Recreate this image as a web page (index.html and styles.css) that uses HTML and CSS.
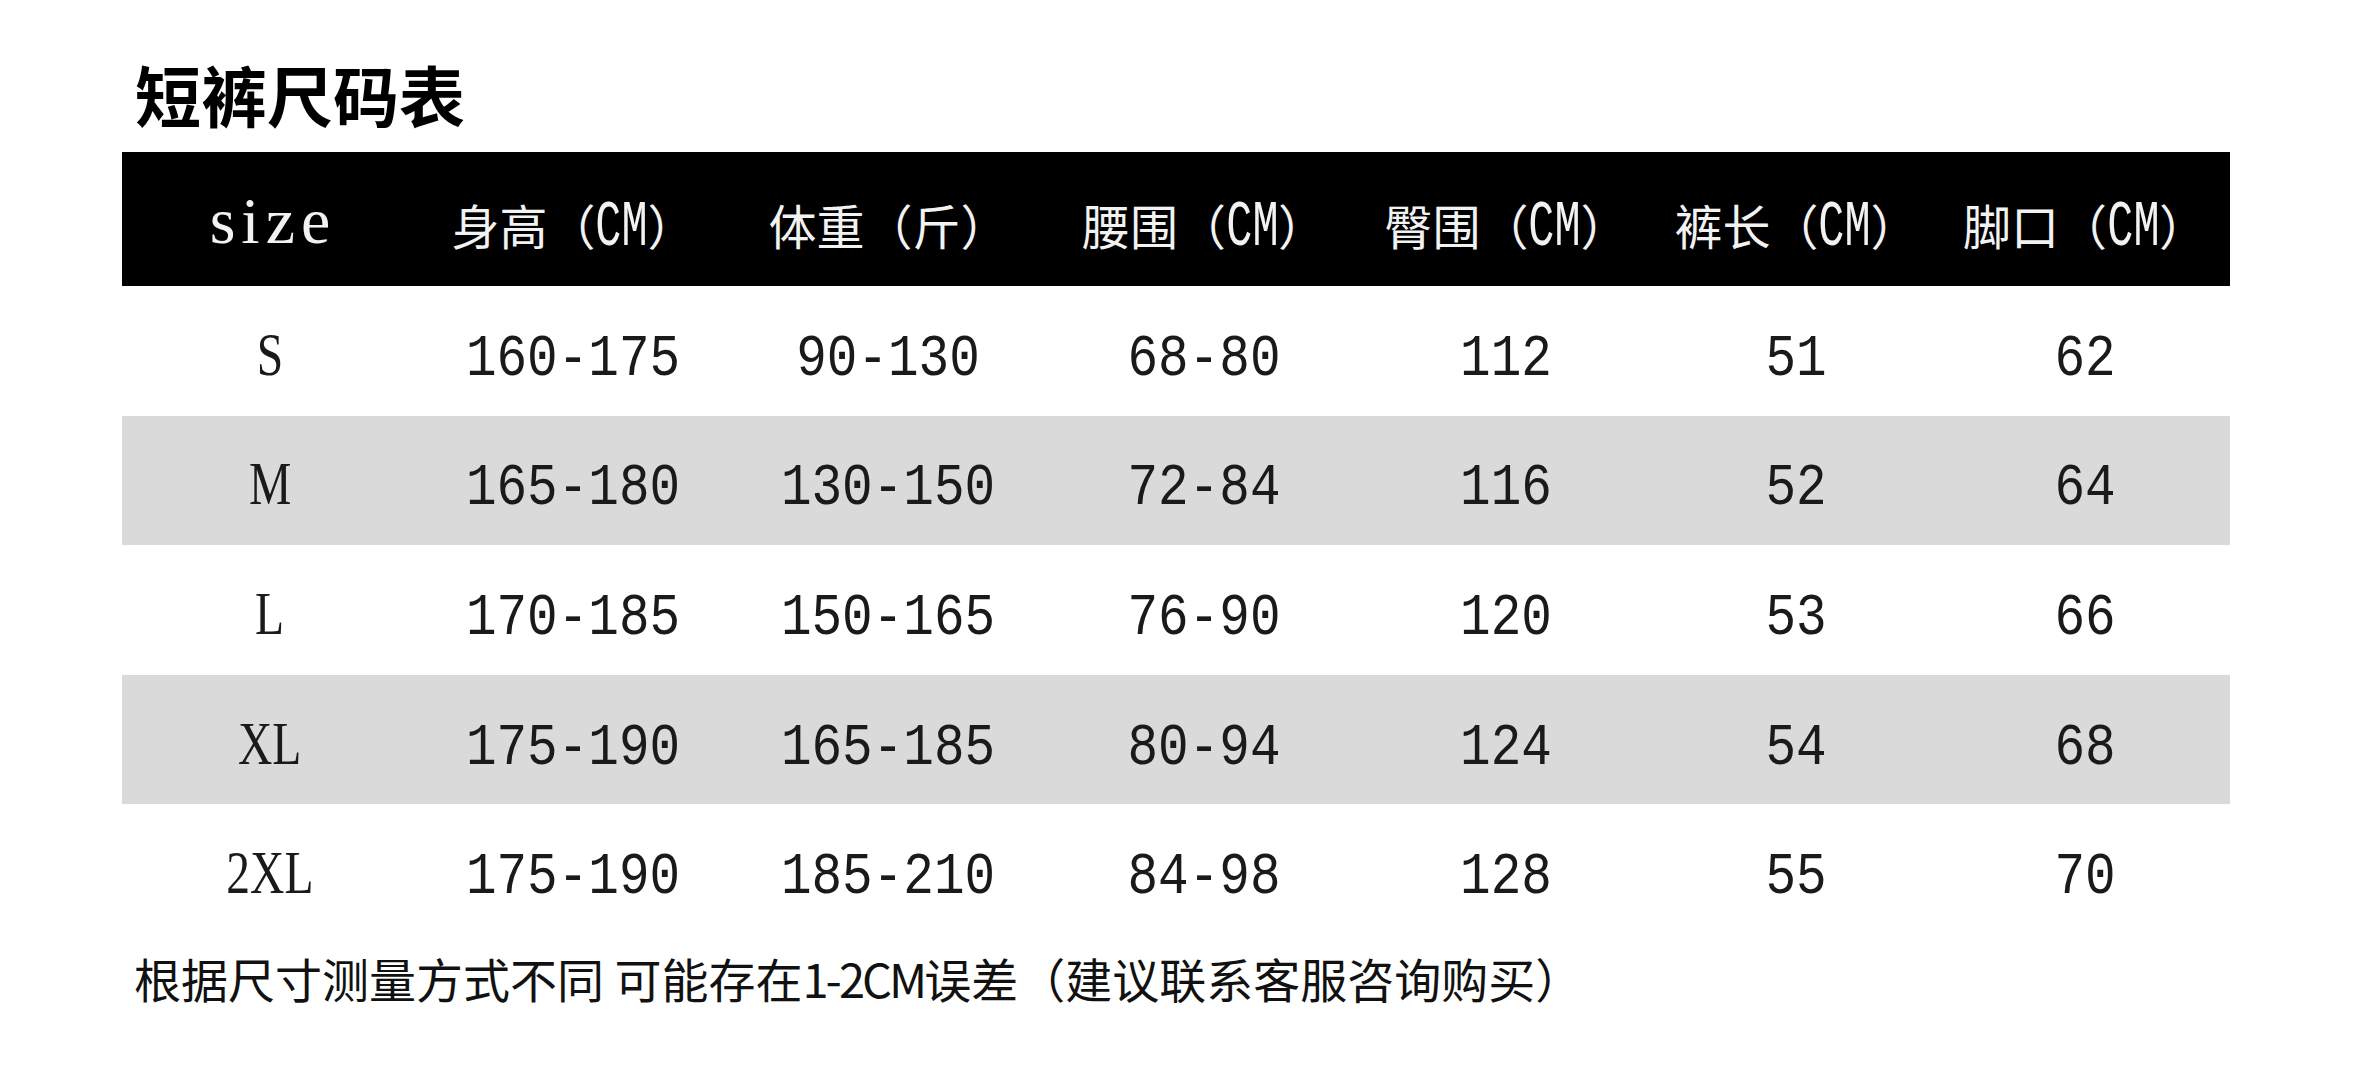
FILE: index.html
```html
<!DOCTYPE html>
<html lang="zh-CN">
<head>
<meta charset="utf-8">
<title>短裤尺码表</title>
<link rel="stylesheet" href="styles.css">
</head>
<body>
<div class="page">
  <h1 class="title">短裤尺码表</h1>
  <div class="table">
    <div class="row head">
      <div class="cell"><span class="lat hsize">size</span></div>
      <div class="cell"><span class="zh">身高（</span><span class="cm"><span class="mono">CM</span></span><span class="zh">）</span></div>
      <div class="cell"><span class="zh">体重（斤）</span></div>
      <div class="cell"><span class="zh">腰围（</span><span class="cm"><span class="mono">CM</span></span><span class="zh">）</span></div>
      <div class="cell"><span class="zh">臀围（</span><span class="cm"><span class="mono">CM</span></span><span class="zh">）</span></div>
      <div class="cell"><span class="zh">裤长（</span><span class="cm"><span class="mono">CM</span></span><span class="zh">）</span></div>
      <div class="cell"><span class="zh">脚口（</span><span class="cm"><span class="mono">CM</span></span><span class="zh">）</span></div>
    </div>
    <div class="row">
      <div class="cell"><span class="lat">S</span></div>
      <div class="cell"><span class="mono">160-175</span></div>
      <div class="cell"><span class="mono">90-130</span></div>
      <div class="cell"><span class="mono">68-80</span></div>
      <div class="cell"><span class="mono">112</span></div>
      <div class="cell"><span class="mono">51</span></div>
      <div class="cell"><span class="mono">62</span></div>
    </div>
    <div class="row alt">
      <div class="cell"><span class="lat">M</span></div>
      <div class="cell"><span class="mono">165-180</span></div>
      <div class="cell"><span class="mono">130-150</span></div>
      <div class="cell"><span class="mono">72-84</span></div>
      <div class="cell"><span class="mono">116</span></div>
      <div class="cell"><span class="mono">52</span></div>
      <div class="cell"><span class="mono">64</span></div>
    </div>
    <div class="row">
      <div class="cell"><span class="lat">L</span></div>
      <div class="cell"><span class="mono">170-185</span></div>
      <div class="cell"><span class="mono">150-165</span></div>
      <div class="cell"><span class="mono">76-90</span></div>
      <div class="cell"><span class="mono">120</span></div>
      <div class="cell"><span class="mono">53</span></div>
      <div class="cell"><span class="mono">66</span></div>
    </div>
    <div class="row alt">
      <div class="cell"><span class="lat">XL</span></div>
      <div class="cell"><span class="mono">175-190</span></div>
      <div class="cell"><span class="mono">165-185</span></div>
      <div class="cell"><span class="mono">80-94</span></div>
      <div class="cell"><span class="mono">124</span></div>
      <div class="cell"><span class="mono">54</span></div>
      <div class="cell"><span class="mono">68</span></div>
    </div>
    <div class="row">
      <div class="cell"><span class="lat">2XL</span></div>
      <div class="cell"><span class="mono">175-190</span></div>
      <div class="cell"><span class="mono">185-210</span></div>
      <div class="cell"><span class="mono">84-98</span></div>
      <div class="cell"><span class="mono">128</span></div>
      <div class="cell"><span class="mono">55</span></div>
      <div class="cell"><span class="mono">70</span></div>
    </div>
  </div>
  <p class="note">根据尺寸测量方式不同 可能存在<span class="note-lat">1-2CM</span>误差（建议联系客服咨询购买）</p>
</div>
</body>
</html>
```
FILE: styles.css
```css
html, body {
  margin: 0;
  padding: 0;
  background: #ffffff;
}
.page {
  width: 2361px;
  height: 1080px;
  box-sizing: border-box;
  padding: 60px 0 0 122px;
  font-family: "Noto Sans CJK SC", sans-serif;
  color: #111111;
}
.title {
  margin: 0 0 26px 13px;
  font-size: 66px;
  line-height: 66px;
  font-weight: 700;
  color: #000000;
}
.table {
  width: 2108px;
}
.row {
  display: grid;
  grid-template-columns: 296px 311px 319px 312px 293px 287px 290px;
  height: 129.6px;
  background: #ffffff;
}
.row.alt {
  background: #dadada;
}
.row.head {
  height: 134px;
  background: #000000;
  color: #f2f2f2;
}
.cell {
  display: flex;
  align-items: center;
  justify-content: center;
  white-space: nowrap;
  padding-top: 16px;
  box-sizing: border-box;
}
.head .cell {
  padding-top: 10px;
}
.mono {
  display: inline-block;
  font-family: "Liberation Mono", monospace;
  font-size: 60px;
  line-height: 60px;
  font-weight: 400;
  color: #1a1a1a;
  transform: scaleX(0.85);
}
.lat {
  display: inline-block;
  font-family: "Liberation Serif", serif;
  font-size: 61px;
  line-height: 60px;
  font-weight: 400;
  color: #1a1a1a;
  transform: translateY(-4px) scaleX(0.78);
}
.head .lat.hsize {
  font-size: 66px;
  letter-spacing: 6px;
  color: #f2f2f2;
  transform: translate(3px, -3px);
}
.zh {
  font-family: "Noto Sans CJK SC", sans-serif;
  font-size: 48px;
  line-height: 70px;
  font-weight: 400;
}
.cm {
  display: inline-flex;
  justify-content: center;
  width: 52px;
}
.head .cm .mono {
  font-size: 64px;
  color: #f2f2f2;
  transform: translateY(4px) scaleX(0.68);
}
.note {
  margin: 14px 0 0 12px;
  font-size: 47px;
  line-height: 60px;
  font-weight: 400;
  color: #111111;
}
.note-lat {
  letter-spacing: -3px;
}
```
